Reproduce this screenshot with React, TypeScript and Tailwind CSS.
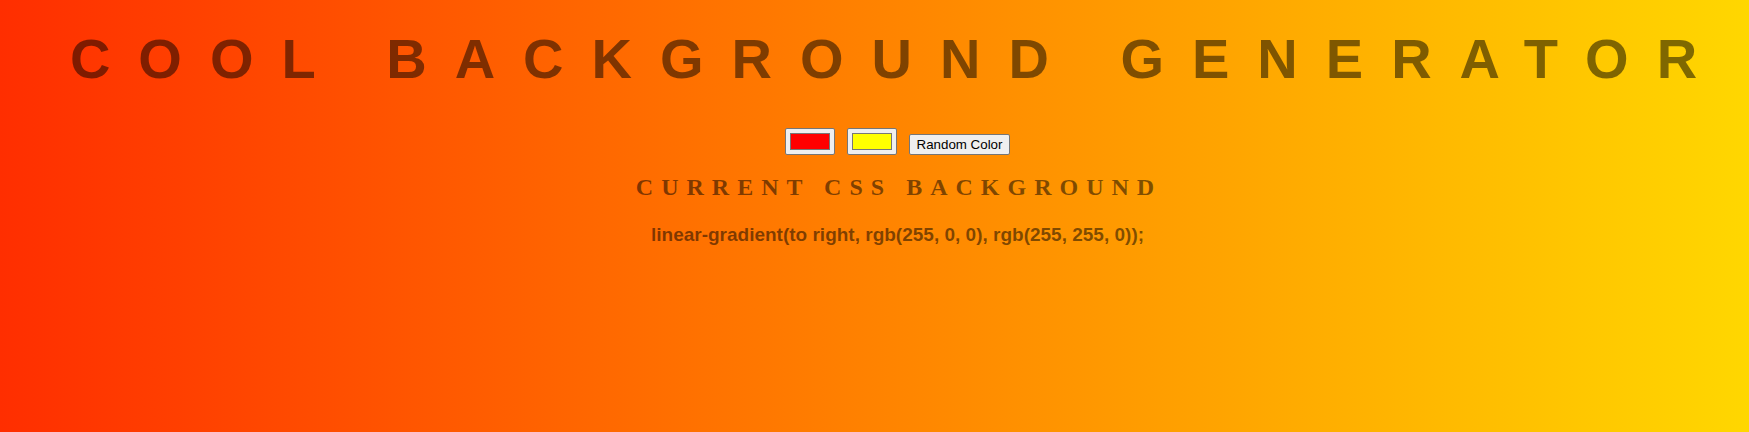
import React, { useState } from 'react';

export default function App() {
  const [color1, setColor1] = useState('#ff0000');
  const [color2, setColor2] = useState('#ffff00');

  const toRgb = (hex: string) => {
    const n = parseInt(hex.slice(1), 16);
    return `rgb(${(n >> 16) & 255}, ${(n >> 8) & 255}, ${n & 255})`;
  };

  const randomHex = () =>
    '#' + Math.floor(Math.random() * 0xffffff).toString(16).padStart(6, '0');

  return (
    <div className="h-screen w-full pl-[46px] bg-[linear-gradient(to_right,#ff2e00,#ffd700)] text-black/50 font-['Liberation_Sans',Arial,sans-serif] text-center">
      {/* title */}
      <h1 className="pt-[27px] text-[56px] leading-[64px] font-bold tracking-[0.5em]">
        COOL BACKGROUND GENERATOR
      </h1>

      {/* controls */}
      <div className="mt-[37px] flex items-end justify-center gap-[12px]">
        <input
          type="color"
          value={color1}
          onChange={(e) => setColor1(e.target.value)}
          className="w-[50px] h-[27px] px-[4px] py-[4px] bg-[#efefef] border border-[#767676] rounded-[2px] cursor-pointer [&::-webkit-color-swatch-wrapper]:p-0 [&::-webkit-color-swatch]:border [&::-webkit-color-swatch]:border-[#777] [&::-webkit-color-swatch]:rounded-none"
        />
        <input
          type="color"
          value={color2}
          onChange={(e) => setColor2(e.target.value)}
          className="w-[50px] h-[27px] px-[4px] py-[4px] bg-[#efefef] border border-[#767676] rounded-[2px] cursor-pointer [&::-webkit-color-swatch-wrapper]:p-0 [&::-webkit-color-swatch]:border [&::-webkit-color-swatch]:border-[#777] [&::-webkit-color-swatch]:rounded-none"
        />
        <button
          onClick={() => {
            setColor1(randomHex());
            setColor2(randomHex());
          }}
          className="h-[21px] px-[7px] bg-[#efefef] border border-[#767676] rounded-[2px] text-[13.33px] leading-[19px] text-black tracking-normal"
        >
          Random Color
        </button>
      </div>

      {/* current css */}
      <h3 className="mt-[18px] pl-[3px] font-['Liberation_Serif','Times_New_Roman',serif] text-[24px] leading-[28px] font-bold tracking-[8px]">
        CURRENT CSS BACKGROUND
      </h3>
      <p className="mt-[23px] text-[19px] leading-[22px] font-bold">
        linear-gradient(to right, {toRgb(color1)}, {toRgb(color2)});
      </p>
    </div>
  );
}
